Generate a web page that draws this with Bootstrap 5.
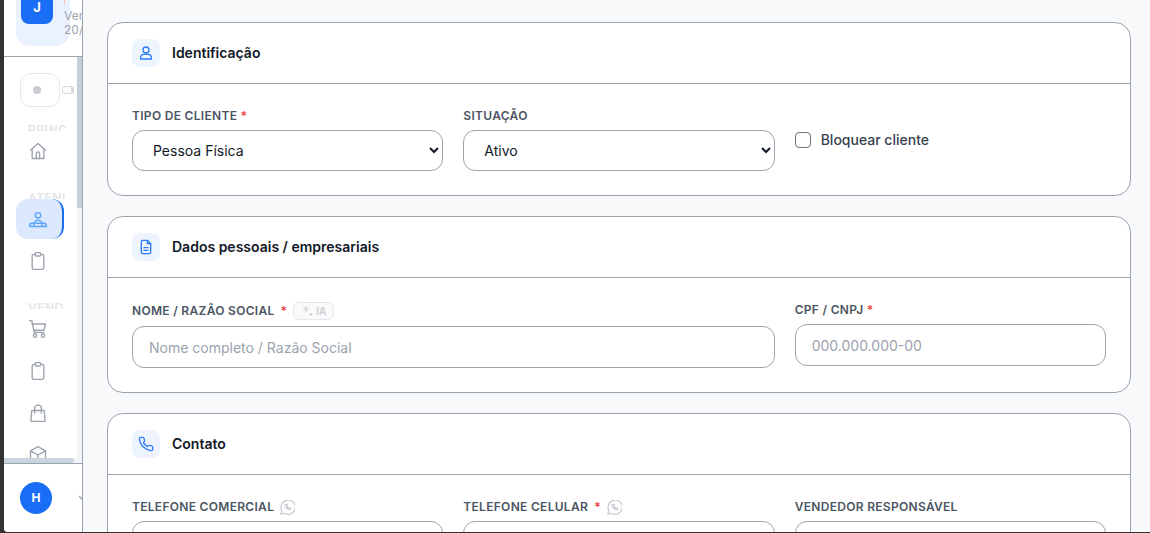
<!doctype html>
<html lang="pt-BR">
<head>
<meta charset="utf-8">
<title>Cliente</title>
<link href="https://cdn.jsdelivr.net/npm/bootstrap@5.3.0/dist/css/bootstrap.min.css" rel="stylesheet">
<style>
html,body{height:100%;overflow:hidden}
body{background:#333;font-family:Inter,"Liberation Sans",sans-serif;padding:0 0 1px 4px}
.shell{height:532px;background:#f8f9fb;border-bottom-left-radius:4px;overflow:hidden}
.side{width:79px;flex:none;background:#fff;border-right:1px solid #9ca3af;overflow:hidden;position:relative}
.side-top{height:57px;flex:none;border-bottom:1px solid #9ca3af;padding-left:12px;overflow:hidden}
.tenant{width:54px;height:46px;flex:none;background:#e9f2fe;border-radius:0 0 14px 14px;white-space:nowrap}
.tenant-av{width:32px;height:32px;margin:-8px 0 0 5px;flex:none;background:#1a6ef5;color:#fff;border-radius:0 0 8px 8px;font-size:13px;font-weight:700}
.tenant-tx{margin-left:11px;font-size:12px;line-height:14px;color:#9ca3af;flex:none}
.tick{width:1px;height:5px;background:#f6c6b4;margin-bottom:4px}
.scroller{flex:1 1 auto;min-height:0;overflow:hidden;padding:16px 0 0 12px;position:relative}
.toggle-row{margin:0 0 17px 4px;gap:2px;opacity:.55}
.toggle-box{width:40px;height:34px;border:1px solid #d1d5db;border-radius:11px;padding-left:12px}
.toggle-dot{width:8px;height:8px;background:#9ca3af;border-radius:50%}
.toggle-mini{width:12px;height:8px;border:1px solid #b9bec7;border-right-width:3px;border-radius:3px}
.sec+.sec{margin-top:21px}
.sec-label{height:7px;width:38px;overflow:hidden;margin-left:12px;font-size:12px;line-height:11px;font-weight:600;letter-spacing:.5px;color:#e3e5e9;white-space:nowrap}
.nav-it{width:48px;height:40px;margin-bottom:2px;padding-right:2px;border-right:2px solid transparent;border-radius:12px;color:#9ca3af}
.nav-it.on{background:#dbe8fd;border-right-color:#1a6ef5;color:#60a5fa}
.sb-y{position:absolute;right:0;top:0;bottom:0;width:5px;background:#f1f5f9}
.sb-y i{display:block;height:151px;background:#c4cfdc}
.sb-x{position:absolute;left:0;right:0;bottom:0;height:5px;background:#f1f5f9}
.sb-x i{display:block;width:70px;height:5px;background:#cbd5e1;border-radius:0 3px 3px 0}
.side-foot{height:69px;flex:none;border-top:1px solid #9ca3af;padding-left:16px}
.user-av{width:32px;height:32px;flex:none;background:#1a6ef5;color:#fff;border-radius:50%;font-size:12px;font-weight:700}
.foot-chev{margin-left:26px;flex:none;color:#9ca3af}
.page{flex:1 1 auto;min-width:0;padding:22px 19px 0 24px}
.panel{border:1px solid #9ca3af;border-radius:16px;background:#fff;flex:none;margin-bottom:20px}
.panel-head{height:61px;padding:0 24px;border-bottom:1px solid #9ca3af;gap:12px}
.panel-ic{width:28px;height:28px;background:#edf4fe;border-radius:8px;color:#2f7bf6}
.panel-tt{font-size:14px;font-weight:600;color:#111827;margin-bottom:2px}
.panel-bd{padding:24px}
.gut{--bs-gutter-x:20px}
.fld-l{font-size:12px;line-height:16px;font-weight:600;letter-spacing:.3px;color:#4b5563;text-transform:uppercase;margin-bottom:6px;white-space:nowrap}
.gap-s{gap:6px}
.star{color:#ef4444}
.ia{height:18px;width:41px;border:1px solid #e5e7eb;border-radius:6px;font-size:10px;font-weight:600;letter-spacing:0;color:#c9ccd3;gap:3px;background:#fafafa}
.wa{color:#c3c7ce}
.ctl{border:1px solid #9ca3af;border-radius:12px;height:42px;padding:0 16px;font-size:14px;color:#111827;background:#fff}
.ctl::placeholder{color:#9ca3af;opacity:1}
.ctl-s{height:41px;appearance:auto;-webkit-appearance:auto;background-image:none;padding:0 3px 0 16px}
.chk-w{padding-top:24px;gap:10px;height:40px}
.chk{width:16px;height:16px;margin:0;flex:none;border:1px solid #6b7280;border-radius:3px}
.chk-l{font-size:14px;font-weight:500;color:#374151;margin-bottom:2px}
</style>
</head>
<body>
<div class="shell d-flex">
  <aside class="side d-flex flex-column">
    <div class="side-top d-flex">
      <div class="tenant d-flex">
        <div class="tenant-av d-flex align-items-center justify-content-center">J</div>
        <div class="tenant-tx"><div class="tick"></div><div>Vencimento</div><div>20/12/2025</div></div>
      </div>
    </div>
    <div class="scroller">
      <div class="toggle-row d-flex align-items-center">
        <div class="toggle-box d-flex align-items-center"><div class="toggle-dot"></div></div>
        <div class="toggle-mini"></div>
      </div>
      <div class="sec">
        <div class="sec-label">PRINC</div>
        <div class="nav-it d-flex align-items-center justify-content-center">
          <svg width="20" height="20" viewBox="0 0 24 24" fill="none" stroke="currentColor" stroke-width="1.6" stroke-linecap="round" stroke-linejoin="round"><path d="M3 11 12 3l9 8"/><path d="M5 9.500V21h14V9.500"/><path d="M10 21v-6a2 2 0 0 1 4 0v6"/></svg>
        </div>
      </div>
      <div class="sec">
        <div class="sec-label">ATENI</div>
        <div class="nav-it on d-flex align-items-center justify-content-center">
          <svg width="20" height="20" viewBox="0 -1.500 24 24" fill="none" stroke="currentColor" stroke-width="1.700" stroke-linecap="round" stroke-linejoin="round"><circle cx="12" cy="6" r="3.200"/><path d="M7 19v-2a5 5 0 0 1 10 0v2"/><path d="M2 19.500v-1a3 3 0 0 1 3-3h14a3 3 0 0 1 3 3v1z"/></svg>
        </div>
        <div class="nav-it d-flex align-items-center justify-content-center">
          <svg width="20" height="20" viewBox="0 0 24 24" fill="none" stroke="currentColor" stroke-width="1.600" stroke-linecap="round" stroke-linejoin="round"><rect x="8.500" y="2" width="7" height="4" rx="1.500"/><path d="M8.500 4H7a2 2 0 0 0-2 2v14a2 2 0 0 0 2 2h10a2 2 0 0 0 2-2V6a2 2 0 0 0-2-2h-1.500"/></svg>
        </div>
      </div>
      <div class="sec">
        <div class="sec-label">VEND</div>
        <div class="nav-it d-flex align-items-center justify-content-center">
          <svg width="20" height="20" viewBox="0 0 24 24" fill="none" stroke="currentColor" stroke-width="1.600" stroke-linecap="round" stroke-linejoin="round"><path d="M2 2h2.500l3 14h12"/><path d="M5 6h16l-2 7.500H7"/><circle cx="8.500" cy="20" r="2"/><circle cx="18" cy="20" r="2"/></svg>
        </div>
        <div class="nav-it d-flex align-items-center justify-content-center">
          <svg width="20" height="20" viewBox="0 0 24 24" fill="none" stroke="currentColor" stroke-width="1.600" stroke-linecap="round" stroke-linejoin="round"><rect x="8.500" y="2" width="7" height="4" rx="1.500"/><path d="M8.500 4H7a2 2 0 0 0-2 2v14a2 2 0 0 0 2 2h10a2 2 0 0 0 2-2V6a2 2 0 0 0-2-2h-1.500"/></svg>
        </div>
        <div class="nav-it d-flex align-items-center justify-content-center">
          <svg width="20" height="20" viewBox="0 0 24 24" fill="none" stroke="currentColor" stroke-width="1.600" stroke-linecap="round" stroke-linejoin="round"><path d="M4.500 9h15l1 13h-17z"/><path d="M8 12V6.500a4 4 0 0 1 8 0V12"/></svg>
        </div>
        <div class="nav-it d-flex align-items-center justify-content-center">
          <svg width="20" height="20" viewBox="0 0 24 24" fill="none" stroke="currentColor" stroke-width="1.600" stroke-linecap="round" stroke-linejoin="round"><path d="M12 2 3 7v10l9 5 9-5V7z"/><path d="M3 7l9 5 9-5"/><path d="M12 12v10"/></svg>
        </div>
      </div>
      <div class="sb-y"><i></i></div>
      <div class="sb-x"><i></i></div>
    </div>
    <div class="side-foot d-flex align-items-center">
      <div class="user-av d-flex align-items-center justify-content-center">H</div>
      <svg class="foot-chev" width="10" height="10" viewBox="0 0 10 10" fill="none" stroke="currentColor" stroke-width="1.300"><path d="M1 3l4 4 4-4"/></svg>
    </div>
  </aside>
  <main class="page d-flex flex-column">
    <section class="panel">
      <div class="panel-head d-flex align-items-center">
        <div class="panel-ic d-flex align-items-center justify-content-center">
          <svg width="16" height="16" viewBox="0 0 24 24" fill="none" stroke="currentColor" stroke-width="2" stroke-linecap="round" stroke-linejoin="round"><circle cx="12" cy="7.500" r="4.500"/><path d="M4 21v-2a5 5 0 0 1 5-5h6a5 5 0 0 1 5 5v2z"/></svg>
        </div>
        <div class="panel-tt">Identificação</div>
      </div>
      <div class="panel-bd">
        <div class="row gut">
          <div class="col-4">
            <div class="fld-l">Tipo de cliente <span class="star">*</span></div>
            <select class="form-select ctl ctl-s"><option>Pessoa Física</option></select>
          </div>
          <div class="col-4">
            <div class="fld-l">Situação</div>
            <select class="form-select ctl ctl-s"><option>Ativo</option></select>
          </div>
          <div class="col-4">
            <div class="chk-w d-flex align-items-center">
              <input class="form-check-input chk" type="checkbox" id="blq">
              <label class="chk-l" for="blq">Bloquear cliente</label>
            </div>
          </div>
        </div>
      </div>
    </section>
    <section class="panel">
      <div class="panel-head d-flex align-items-center">
        <div class="panel-ic d-flex align-items-center justify-content-center">
          <svg width="16" height="16" viewBox="0 0 24 24" fill="none" stroke="currentColor" stroke-width="2" stroke-linecap="round" stroke-linejoin="round"><path d="M14 2H7a2 2 0 0 0-2 2v16a2 2 0 0 0 2 2h10a2 2 0 0 0 2-2V7z"/><path d="M14 2v5h5"/><path d="M9 13h6M9 17h6"/></svg>
        </div>
        <div class="panel-tt">Dados pessoais / empresariais</div>
      </div>
      <div class="panel-bd">
        <div class="row gut">
          <div class="col-8">
            <div class="fld-l d-flex align-items-center gap-s">
              <span>Nome / Razão Social</span><span class="star">*</span>
              <span class="ia d-inline-flex align-items-center justify-content-center">
                <svg width="12" height="12" viewBox="0 0 12 12" fill="none" stroke="currentColor" stroke-width="1"><path d="M5 1v6M2 4h6M10 8v3M8.500 9.500h3"/></svg>IA
              </span>
            </div>
            <input class="form-control ctl" placeholder="Nome completo / Razão Social">
          </div>
          <div class="col-4">
            <div class="fld-l">CPF / CNPJ <span class="star">*</span></div>
            <input class="form-control ctl" placeholder="000.000.000-00">
          </div>
        </div>
      </div>
    </section>
    <section class="panel">
      <div class="panel-head d-flex align-items-center">
        <div class="panel-ic d-flex align-items-center justify-content-center">
          <svg width="16" height="16" viewBox="0 0 24 24" fill="none" stroke="currentColor" stroke-width="2" stroke-linecap="round" stroke-linejoin="round"><path d="M22 16.900v3a2 2 0 0 1-2.200 2 19.800 19.800 0 0 1-8.600-3.100 19.500 19.500 0 0 1-6-6A19.800 19.800 0 0 1 2.100 4.200 2 2 0 0 1 4.100 2h3a2 2 0 0 1 2 1.700c.1 1 .4 1.900.7 2.800a2 2 0 0 1-.5 2.100L8.100 9.900a16 16 0 0 0 6 6l1.300-1.300a2 2 0 0 1 2.100-.4c.9.300 1.800.6 2.800.7a2 2 0 0 1 1.700 2z"/></svg>
        </div>
        <div class="panel-tt">Contato</div>
      </div>
      <div class="panel-bd">
        <div class="row gut">
          <div class="col-4">
            <div class="fld-l d-flex align-items-center gap-s"><span>Telefone comercial</span>
              <svg class="wa" width="15" height="15" viewBox="2 2 20 20" fill="none" stroke="currentColor" stroke-width="1.500" stroke-linecap="round" stroke-linejoin="round"><path d="M3 21l1.500-5A9.500 9.500 0 1 1 8 19.700z"/><path d="M9 8c-.800 1 0 3 1.500 4.500S14.500 15 15.700 14.500l.8-1.300-2-1-.8.7c-1-.400-1.800-1.200-2.300-2.300l.8-.8-1-2z"/></svg>
            </div>
            <input class="form-control ctl">
          </div>
          <div class="col-4">
            <div class="fld-l d-flex align-items-center gap-s"><span>Telefone celular</span><span class="star">*</span>
              <svg class="wa" width="15" height="15" viewBox="2 2 20 20" fill="none" stroke="currentColor" stroke-width="1.500" stroke-linecap="round" stroke-linejoin="round"><path d="M3 21l1.500-5A9.500 9.500 0 1 1 8 19.700z"/><path d="M9 8c-.800 1 0 3 1.500 4.500S14.500 15 15.700 14.500l.8-1.300-2-1-.8.7c-1-.400-1.800-1.200-2.300-2.300l.8-.8-1-2z"/></svg>
            </div>
            <input class="form-control ctl">
          </div>
          <div class="col-4">
            <div class="fld-l">Vendedor responsável</div>
            <input class="form-control ctl">
          </div>
        </div>
      </div>
    </section>
  </main>
</div>
<script src="https://cdn.jsdelivr.net/npm/bootstrap@5.3.0/dist/js/bootstrap.bundle.min.js"></script>
</body>
</html>
